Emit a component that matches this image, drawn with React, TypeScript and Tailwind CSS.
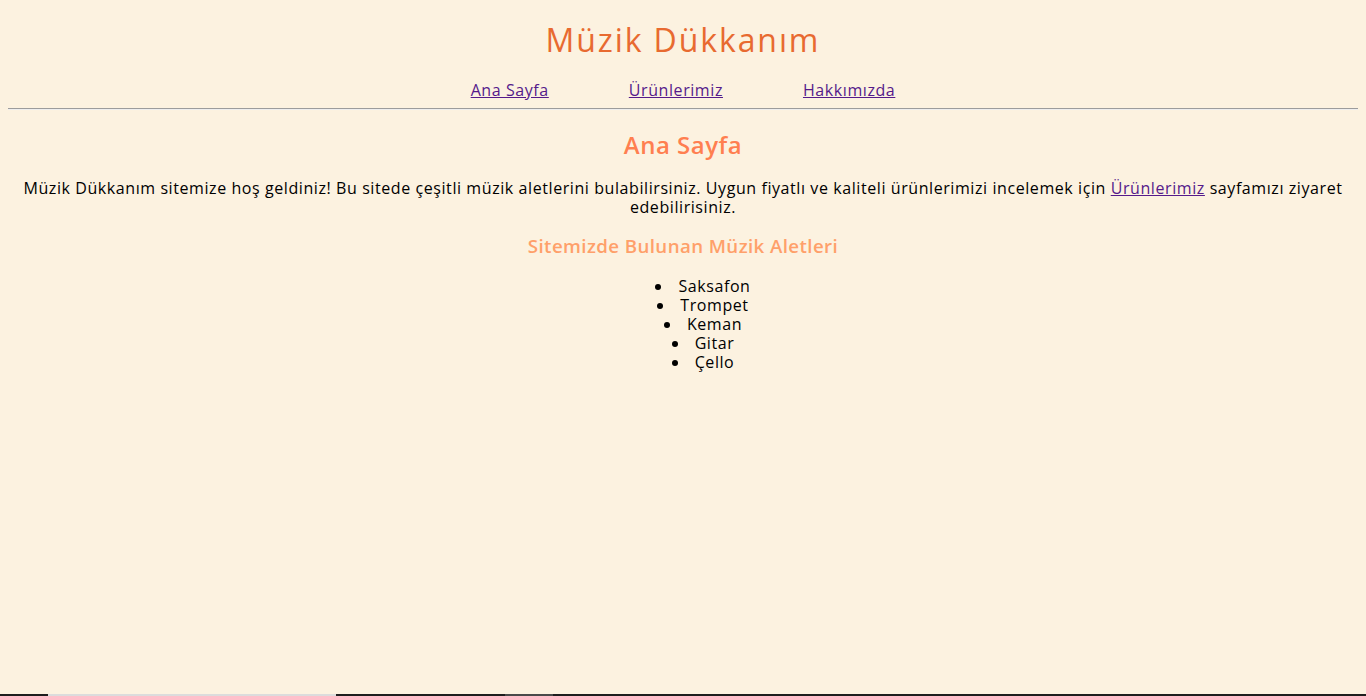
import React from "react";

export default function App() {
  const items = ["Saksafon", "Trompet", "Keman", "Gitar", "Çello"];
  return (
    <div
      className="min-h-[696px] h-[696px] bg-[#fcf2e0] flex flex-col text-black overflow-hidden tracking-[0.58px]"
      style={{ fontFamily: '"Open Sans", "Noto Sans", sans-serif' }}
    >
      <div className="flex-1 px-2">
        <header>
          <h1 className="mt-[20px] text-center text-[32px] leading-[39px] tracking-[1.9px] text-[#e86a30] font-normal">
            Müzik Dükkanım
          </h1>
          <nav className="mt-[22px] flex justify-center gap-[80px] text-[16px] leading-[19px]">
            <a href="#" className="underline text-[#551a8b]">Ana Sayfa</a>
            <a href="#" className="underline text-[#551a8b]">Ürünlerimiz</a>
            <a href="#" className="underline text-[#551a8b]">Hakkımızda</a>
          </nav>
        </header>
        <hr className="mt-[8px] border-0 border-t border-b border-t-[#9c9c9c] border-b-[#eeeeee] h-0" />
        <main className="text-center">
          <h2 className="mt-[20px] text-[24px] leading-[29px] font-semibold tracking-[0.5px] text-[#ff7f50]">Ana Sayfa</h2>
          <p className="mt-[20px] text-[16px] leading-[19px]">
            Müzik Dükkanım sitemize hoş geldiniz! Bu sitede çeşitli müzik aletlerini bulabilirsiniz. Uygun fiyatlı ve kaliteli ürünlerimizi incelemek için{" "}
            <a href="#" className="underline text-[#551a8b]">Ürünlerimiz</a> sayfamızı ziyaret edebilirisiniz.
          </p>
          <h3 className="mt-[17px] text-[18.72px] leading-[23px] font-semibold tracking-[0.4px] text-[#ffa06a]">
            Sitemizde Bulunan Müzik Aletleri
          </h3>
          <ul className="mt-[20px] pl-[40px] list-disc list-inside text-[16px] leading-[19px]">
            {items.map((i) => (
              <li key={i}>{i}</li>
            ))}
          </ul>
        </main>
      </div>
      <div className="h-[2px] flex">
        <div className="w-[48px] bg-[#1e1e1e]" />
        <div className="w-[288px] bg-[#dcdcdc]" />
        <div className="w-[169px] bg-[#1e1e1e]" />
        <div className="w-[48px] bg-[#4a4a4a]" />
        <div className="flex-1 bg-[#1e1e1e]" />
      </div>
    </div>
  );
}
